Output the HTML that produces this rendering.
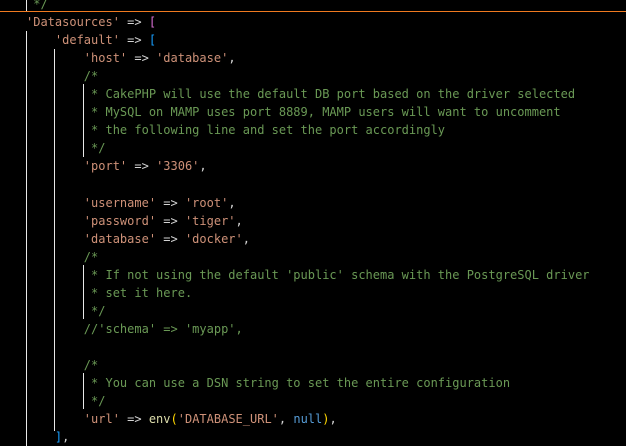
<!DOCTYPE html>
<html><head><meta charset="utf-8"><style>
html,body{margin:0;padding:0;background:#000;width:626px;height:446px;overflow:hidden;position:relative}
pre{position:absolute;left:26px;top:-5px;margin:0;font-family:"DejaVu Sans Mono","Liberation Mono",monospace;font-size:12px;line-height:18.05px;color:#d4d4d4;white-space:pre}
.s{color:#ce9178}.c{color:#6a9955}.p{color:#da70d6}.b{color:#179fff}.f{color:#dcdcaa}.y{color:#ffd700}.k{color:#569cd6}
.g{position:absolute;width:1px;background:#e8e8e8}
.o{position:absolute;left:0;top:11px;width:626px;height:1px;background:#f07a20}
</style></head><body>
<div class="g" style="left:26px;top:0;height:11px"></div>
<div class="g" style="left:26px;top:31px;height:415px"></div>
<div class="g" style="left:54px;top:49px;height:382px"></div>
<div class="g" style="left:83px;top:84px;height:73px"></div>
<div class="g" style="left:83px;top:265px;height:54px"></div>
<div class="g" style="left:83px;top:373px;height:36px"></div>
<div class="o"></div>
<pre><span class="c"> */</span>
<span class="s">'Datasources'</span> =&gt; <span class="p">[</span>
    <span class="s">'default'</span> =&gt; <span class="b">[</span>
        <span class="s">'host'</span> =&gt; <span class="s">'database'</span>,
        <span class="c">/*</span>
<span class="c">         * CakePHP will use the default DB port based on the driver selected</span>
<span class="c">         * MySQL on MAMP uses port 8889, MAMP users will want to uncomment</span>
<span class="c">         * the following line and set the port accordingly</span>
<span class="c">         */</span>
        <span class="s">'port'</span> =&gt; <span class="s">'3306'</span>,

        <span class="s">'username'</span> =&gt; <span class="s">'root'</span>,
        <span class="s">'password'</span> =&gt; <span class="s">'tiger'</span>,
        <span class="s">'database'</span> =&gt; <span class="s">'docker'</span>,
        <span class="c">/*</span>
<span class="c">         * If not using the default 'public' schema with the PostgreSQL driver</span>
<span class="c">         * set it here.</span>
<span class="c">         */</span>
        <span class="c">//'schema' =&gt; 'myapp',</span>

        <span class="c">/*</span>
<span class="c">         * You can use a DSN string to set the entire configuration</span>
<span class="c">         */</span>
        <span class="s">'url'</span> =&gt; <span class="f">env</span><span class="y">(</span><span class="s">'DATABASE_URL'</span>, <span class="k">null</span><span class="y">)</span>,
    <span class="b">]</span>,
</pre>
</body></html>
